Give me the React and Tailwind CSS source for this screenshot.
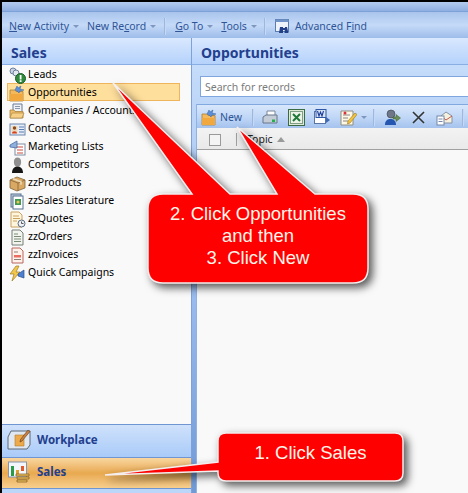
const NAV_ITEMS = [
  { label: 'Leads', icon: LeadsIcon },
  { label: 'Opportunities', icon: FolderStarIcon, active: true },
  { label: 'Companies / Accounts', icon: CompaniesIcon },
  { label: 'Contacts', icon: ContactsIcon },
  { label: 'Marketing Lists', icon: MarketingIcon },
  { label: 'Competitors', icon: CompetitorIcon },
  { label: 'zzProducts', icon: BoxIcon },
  { label: 'zzSales Literature', icon: LiteratureIcon },
  { label: 'zzQuotes', icon: QuotesIcon },
  { label: 'zzOrders', icon: OrdersIcon },
  { label: 'zzInvoices', icon: InvoicesIcon },
  { label: 'Quick Campaigns', icon: CampaignIcon },
];

function LeadsIcon() {
  return (
    <svg width="17" height="17" viewBox="0 0 17 17">
      <circle cx="4" cy="4" r="3" fill="#c9d3e2" stroke="#6d7f9c" />
      <circle cx="7" cy="6" r="3" fill="#e3e8f0" stroke="#6d7f9c" />
      <circle cx="11.5" cy="11.5" r="5" fill="#2f8a3c" stroke="#1c5a28" />
      <rect x="10.7" y="8" width="1.8" height="4.5" fill="#fff" />
      <rect x="10.7" y="13.2" width="1.8" height="1.8" fill="#fff" />
    </svg>
  );
}

function FolderStarIcon() {
  return (
    <svg width="17" height="17" viewBox="0 0 17 17">
      <path d="M1 5h5l1 1.5h7V16H1z" fill="#f3b95c" stroke="#a5803c" strokeWidth="0.8" />
      <path d="M1 9h13v7H1z" fill="#f0a83f" />
      <path d="M6 5l2-4 1 2 3-2-1 3 4 1-4 1-1 2-2-2z" fill="#5b8fd9" stroke="#34609f" strokeWidth="0.5" />
    </svg>
  );
}

function CompaniesIcon() {
  return (
    <svg width="17" height="17" viewBox="0 0 17 17">
      <path d="M4 8V1h9v7" fill="#eef1f6" stroke="#6a7a94" />
      <path d="M6 3.500h5M6 5.500h5" stroke="#8a98ad" />
      <path d="M1 7h4l1 1.500h8V15H1z" fill="#f1bc66" stroke="#a5803c" strokeWidth="0.8" />
      <path d="M1 15l2-5h12l-2 5z" fill="#f7cf86" stroke="#a5803c" strokeWidth="0.6" />
    </svg>
  );
}

function ContactsIcon() {
  return (
    <svg width="17" height="17" viewBox="0 0 17 17">
      <rect x="1" y="3" width="15" height="11" fill="#e6edf7" stroke="#6c86ad" />
      <rect x="2.5" y="5" width="6" height="7.5" fill="#f0d9b8" />
      <circle cx="5.5" cy="7" r="1.7" fill="#8a4a22" />
      <path d="M3 12.5c0-3 5-3 5 0z" fill="#d8401e" />
      <path d="M10 6h5M10 8.5h5M10 11h5" stroke="#5a7fb5" />
    </svg>
  );
}

function MarketingIcon() {
  return (
    <svg width="17" height="17" viewBox="0 0 17 17">
      <rect x="6" y="5" width="10" height="11" fill="#fff" stroke="#7f8ea6" />
      <path d="M8 8h6M8 11h6M8 14h6" stroke="#d04a3a" />
      <path d="M1 6l7-4v7L1 8z" fill="#8fb0dd" stroke="#4a6ea6" strokeWidth="0.8" />
    </svg>
  );
}

function CompetitorIcon() {
  return (
    <svg width="17" height="17" viewBox="0 0 17 17">
      <ellipse cx="8.5" cy="5" rx="3.6" ry="4.5" fill="#8f8f8f" />
      <path d="M3 16c0-5 3-6.500 5.500-6.500S14 11 14 16z" fill="#161616" />
    </svg>
  );
}

function BoxIcon() {
  return (
    <svg width="17" height="17" viewBox="0 0 17 17">
      <path d="M1 5l7-3 8 3v8l-8 3-7-3z" fill="#d9a862" stroke="#84643a" strokeWidth="0.8" />
      <path d="M1 5l8 3 7-3M9 8v8" fill="none" stroke="#84643a" strokeWidth="0.8" />
      <path d="M4 3.700l8 3v3" fill="none" stroke="#eedcb8" strokeWidth="1.500" />
    </svg>
  );
}

function LiteratureIcon() {
  return (
    <svg width="17" height="17" viewBox="0 0 17 17">
      <rect x="2" y="1" width="10" height="13" fill="#c6d3e6" stroke="#55708f" />
      <rect x="4" y="3" width="10" height="13" fill="#fff" stroke="#55708f" />
      <rect x="6" y="6" width="6" height="6" fill="#3f9a54" />
      <circle cx="9" cy="9" r="1.500" fill="#f0c050" />
    </svg>
  );
}

function QuotesIcon() {
  return (
    <svg width="17" height="17" viewBox="0 0 17 17">
      <path d="M2 1h8l3 3v12H2z" fill="#fff5dc" stroke="#c9a260" />
      <path d="M4 5h6M4 7.500h7M4 10h4" stroke="#c9a260" />
      <circle cx="12.500" cy="12.500" r="3.500" fill="#eef1f5" stroke="#5c6b80" />
      <path d="M12.500 10.500v2h2" fill="none" stroke="#333" strokeWidth="0.8" />
    </svg>
  );
}

function OrdersIcon() {
  return (
    <svg width="17" height="17" viewBox="0 0 17 17">
      <path d="M3 1h8l3 3v12H3z" fill="#f2f4ee" stroke="#767f78" />
      <path d="M5 5h4M5 7.500h7M5 10h7M5 12.500h7" stroke="#7b8a75" strokeWidth="1.200" />
    </svg>
  );
}

function InvoicesIcon() {
  return (
    <svg width="17" height="17" viewBox="0 0 17 17">
      <path d="M3 1h8l3 3v12H3z" fill="#fff2ea" stroke="#b9675e" />
      <rect x="5" y="8" width="7" height="2.500" fill="#ea6d62" />
      <path d="M5 5h4M5 12.500h7" stroke="#8b7f78" strokeWidth="1.200" />
    </svg>
  );
}

function CampaignIcon() {
  return (
    <svg width="17" height="17" viewBox="0 0 17 17">
      <path d="M7 1L1 9h4l-2 7 8-9H7l3-6z" fill="#f3c74d" stroke="#a07c22" strokeWidth="0.7" />
      <path d="M9 9l6-4v8l-6-2z" fill="#4f80cf" stroke="#2c528f" strokeWidth="0.7" />
    </svg>
  );
}

function BinocularsIcon() {
  return (
    <svg width="17" height="17" viewBox="0 0 17 17">
      <rect x="0.500" y="1.500" width="13" height="12" fill="#eef3fb" stroke="#5c7cab" />
      <rect x="0.500" y="1.500" width="13" height="2.500" fill="#6f93c9" />
      <path d="M5 9h3v6H4zM10 9h2l1.500 6H9.500z" fill="#23408a" />
      <rect x="7" y="10" width="3" height="2" fill="#23408a" />
    </svg>
  );
}

function PrinterIcon() {
  return (
    <svg width="17" height="17" viewBox="0 0 17 17">
      <path d="M5 2h8v5H5z" fill="#fff" stroke="#7a8798" />
      <path d="M1 8l3-2h11v8H1z" fill="#c4ccd8" stroke="#69778a" />
      <rect x="10" y="10.500" width="3" height="2.500" fill="#22b14c" />
    </svg>
  );
}

function ExcelIcon() {
  return (
    <svg width="17" height="17" viewBox="0 0 17 17">
      <rect x="0.500" y="0.500" width="16" height="16" fill="#dfe9d8" stroke="#3b6b43" />
      <rect x="2.500" y="2.500" width="12" height="12" fill="#eef3ea" stroke="#7f9f84" />
      <path d="M5 5l7 7M12 5l-7 7" stroke="#1f7a3a" strokeWidth="2" />
    </svg>
  );
}

function WordIcon() {
  return (
    <svg width="17" height="17" viewBox="0 0 17 17">
      <rect x="0.500" y="2.500" width="11" height="12" fill="#fff" stroke="#5875a8" />
      <rect x="2" y="0.500" width="10" height="8" fill="#d6e2f5" stroke="#2c58a6" />
      <path d="M3.500 2l1.500 5 1.500-4 1.500 4 1.500-5" fill="none" stroke="#1f3f98" strokeWidth="1.100" />
      <path d="M12 8l4 3-4 3z" fill="#3f68b5" />
    </svg>
  );
}

function EditIcon() {
  return (
    <svg width="17" height="17" viewBox="0 0 17 17">
      <path d="M1 2h12v14H1z" fill="#fff7e5" stroke="#8e8e80" />
      <path d="M3 6h7M3 9h5M3 12h5" stroke="#888" />
      <circle cx="5" cy="4" r="1.500" fill="#d9323e" />
      <path d="M15 4l2 1.500L10 14l-2.500 1 .5-3z" fill="#f3c440" stroke="#96741c" strokeWidth="0.6" />
    </svg>
  );
}

function AssignIcon() {
  return (
    <svg width="17" height="17" viewBox="0 0 17 17">
      <circle cx="7" cy="5" r="4" fill="#6d7787" stroke="#3a4350" strokeWidth="0.6" />
      <path d="M1 16c0-5 3-6 5.500-6S12 11 12 16z" fill="#2556b0" />
      <path d="M9 8h3V5.500L16.500 9 12 12.500V10H9z" fill="#6b8f58" stroke="#3a5f33" strokeWidth="0.5" />
    </svg>
  );
}

function SharedIcon() {
  return (
    <svg width="17" height="17" viewBox="0 0 17 17">
      <path d="M5 7l5-4 6 4v7H5z" fill="#f6f0de" stroke="#8593a6" />
      <path d="M5 7l5 4 6-4" fill="none" stroke="#c25a4a" />
      <rect x="1" y="7" width="7" height="9" fill="#fff" stroke="#7488a8" />
      <path d="M2.500 10h4M2.500 12.500h4" stroke="#7488a8" />
    </svg>
  );
}

function WorkplaceIcon() {
  return (
    <svg width="24" height="20" viewBox="0 0 24 20">
      <path d="M1 7l3-6h19v14l-3 4H1z" fill="#dfe7f2" stroke="#5e6876" />
      <path d="M8 5h9v11H8z" fill="#eda94a" stroke="#b47d2e" strokeWidth="0.6" />
      <path d="M21 0l2 1.500L15 11l-2 1 .5-2.500z" fill="#cc8040" stroke="#5b3a1c" strokeWidth="0.6" />
    </svg>
  );
}

function SalesIcon() {
  return (
    <svg width="22" height="22" viewBox="0 0 22 22">
      <rect x="0.500" y="1" width="18" height="15" fill="#f3f6fb" stroke="#8494ae" />
      <rect x="3" y="5" width="3" height="10" fill="#2d9a46" />
      <rect x="8" y="9" width="3" height="6" fill="#e0a030" />
      <rect x="13" y="5" width="3" height="5" fill="#e05a2a" />
      <path d="M8 13h13v2H8zM9 16h12v2H9zM9 19h10v2H9z" fill="#f0c060" stroke="#7c5a1c" strokeWidth="0.7" />
    </svg>
  );
}

function Caret({ className = 'ml-[4px]' }) {
  return <span className={`inline-block h-0 w-0 border-x-[3px] border-t-[3px] border-x-transparent border-t-[#7f96bd] ${className}`} />;
}

function Sep({ className }) {
  return <span className={`h-[17px] w-[2px] bg-gradient-to-r from-[#88a8d8] to-[#dbe8fb] ${className}`} />;
}

function TopBar() {
  return (
    <div className="h-[27px] flex items-center pl-[7px] pt-[3px] text-[#2f5597] border-t border-[#7da2da] bg-gradient-to-b from-[#a9c4ec] via-[#c5daf8] to-[#9dbcea]">
      <span className="flex items-center w-[78px]"><span><u>N</u>ew Activity</span><Caret /></span>
      <span className="flex items-center"><span>New Re<u>c</u>ord</span><Caret /></span>
      <Sep className="ml-[8px]" />
      <span className="flex items-center ml-[9px]"><span><u>G</u>o To</span><Caret /></span>
      <span className="flex items-center ml-[8px]"><span><u>T</u>ools</span><Caret /></span>
      <Sep className="ml-[7px]" />
      <span className="ml-[9px] flex"><BinocularsIcon /></span>
      <span className="ml-[3px]">Advanced F<u>i</u>nd</span>
    </div>
  );
}

function Sidebar() {
  return (
    <div className="w-[189px] shrink-0 flex flex-col bg-[#f9f9f9]">
      <div className="h-[27px] flex items-center pl-[9px] pt-[2px] border-b border-[#88aee4] text-[14px] font-bold text-[#23408e] bg-gradient-to-b from-[#d9e8fe] to-[#b5d2fb]">
        Sales
      </div>
      <div className="flex-1 pl-[5px] pr-[11px]">
        {NAV_ITEMS.map((item) => {
          const Icon = item.icon;
          return (
            <div
              key={item.label}
              className={`h-[18px] flex items-center pl-[1px] pt-[2px] gap-[1px] border whitespace-nowrap text-black ${item.active ? 'bg-[#ffdf9c] border-[#eeb45e]' : 'border-transparent'}`}
            >
              <span className="flex w-[18px] shrink-0"><Icon /></span>
              <span>{item.label}</span>
            </div>
          );
        })}
      </div>
      <div className="h-[33px] flex items-center pl-[5px] pb-[2px] gap-[6px] border-t border-[#6f96d0] text-[#23408e] text-[11.5px] font-bold bg-gradient-to-b from-[#cfe1fb] to-[#a9cbf8]">
        <WorkplaceIcon /> Workplace
      </div>
      <div className="h-[32px] flex items-center pl-[6px] pb-[2px] gap-[7px] border-t border-b border-[#6f96d0] text-[#23408e] text-[11.5px] font-bold bg-gradient-to-b from-[#fad7a0] via-[#e8a94f] to-[#f8cf8e]">
        <SalesIcon /> Sales
      </div>
      <div className="h-[4px] bg-[#bcd6fa]" />
    </div>
  );
}

function CommandBar() {
  return (
    <div className="h-[24px] flex items-center pl-[4px] pt-[2px] border-t border-[#82a8e0] bg-gradient-to-b from-[#d8e7fb] via-[#c2d8f7] to-[#a5c3ee]">
      <span className="flex"><FolderStarIcon /></span>
      <span className="ml-[2px] text-[#2f5597]">New</span>
      <Sep className="ml-[10px]" />
      <span className="ml-[8px] flex"><PrinterIcon /></span>
      <span className="ml-[9px] flex"><ExcelIcon /></span>
      <span className="ml-[9px] flex"><WordIcon /></span>
      <span className="ml-[9px] flex"><EditIcon /></span>
      <Caret />
      <Sep className="ml-[6px]" />
      <span className="ml-[9px] flex"><AssignIcon /></span>
      <svg className="ml-[10px]" width="15" height="15" viewBox="0 0 15 15">
        <path d="M2 2l11 11M13 2L2 13" stroke="#333" strokeWidth="1.600" />
      </svg>
      <span className="ml-[10px] flex"><SharedIcon /></span>
      <Sep className="ml-[9px]" />
    </div>
  );
}

function MainPanel() {
  return (
    <div className="flex-1 min-w-0 flex flex-col border-l border-[#7da2da]">
      <div className="h-[27px] flex items-center pl-[9px] pt-[2px] border-b border-[#88aee4] text-[14px] font-bold text-[#23408e] bg-gradient-to-b from-[#d9e8fe] to-[#b5d2fb]">
        Opportunities
      </div>
      <div className="flex-1 flex flex-col pt-[11px] bg-gradient-to-b from-[#c5dcfa] via-[#9dbff0] to-[#7099d5]">
        <div className="ml-[8px] h-[21px] flex items-center pl-[4px] pt-[2px] bg-white border-y border-l border-[#7fa6de] text-[#7b7b7b]">
          Search for records
        </div>
        <div className="h-[7px]" />
        <div className="flex-1 flex flex-col ml-[4px] bg-[#f9f9f9] border-l border-[#8fb1e4]">
          <CommandBar />
          <div className="h-[22px] flex items-center pt-[2px] border-b border-[#a0a0a0] bg-gradient-to-b from-[#f3f3f3] to-[#e9e9e9] text-[#222]">
            <span className="ml-[12px] h-[12px] w-[12px] border border-[#9a9a9a] bg-[#f4f4f4]" />
            <span className="ml-[15px] h-[13px] w-px bg-[#a0a0a0]" />
            <span className="ml-[10px]">Topic</span>
            <span className="ml-[4px] h-0 w-0 border-x-[4px] border-b-[5px] border-x-transparent border-b-[#9a9a9a]" />
          </div>
        </div>
      </div>
    </div>
  );
}

function Callouts() {
  return (
    <>
      <svg className="absolute left-0 top-0 drop-shadow-[4px_4px_4px_rgba(0,0,0,0.65)]" width="468" height="493">
        <path
          d="M163 194 L192 194 L113 83 L230 194 L277 194 L237 127 L315 194 L353 194 Q368 194 368 209 L368 268 Q368 283 353 283 L163 283 Q148 283 148 268 L148 209 Q148 194 163 194 Z"
          fill="#ff0000"
          stroke="#f4eeee"
          strokeWidth="1.500"
        />
        <path
          d="M226 433 L395 433 Q403 433 403 441 L403 473 Q403 481 395 481 L226 481 Q218 481 218 473 L218 471 L105 475 L218 462 L218 441 Q218 433 226 433 Z"
          fill="#ff0000"
          stroke="#f4eeee"
          strokeWidth="1.500"
        />
      </svg>
      <div className="absolute left-[148px] top-[203px] w-[220px] text-center text-[#fff6ea] text-[18.5px] leading-[22px] font-['Liberation_Sans',Arial,sans-serif]">
        2. Click Opportunities<br />and then<br />3. Click New
      </div>
      <div className="absolute left-[218px] top-[442px] w-[185px] text-center text-[#fff6ea] text-[18.5px] leading-[22px] font-['Liberation_Sans',Arial,sans-serif]">
        1. Click Sales
      </div>
    </>
  );
}

export default function App() {
  return (
    <div className="relative w-[468px] h-[493px] overflow-hidden bg-black pt-[2px] pl-[2px] text-[10.5px] font-['Noto_Sans',sans-serif]">
      <div className="h-full flex flex-col bg-[#c5dcfa]">
        <div className="h-[9px] bg-gradient-to-b from-[#b4cbee] to-[#8eaee0]" />
        <TopBar />
        <div className="flex-1 min-h-0 flex">
          <Sidebar />
          <MainPanel />
        </div>
      </div>
      <Callouts />
    </div>
  );
}
